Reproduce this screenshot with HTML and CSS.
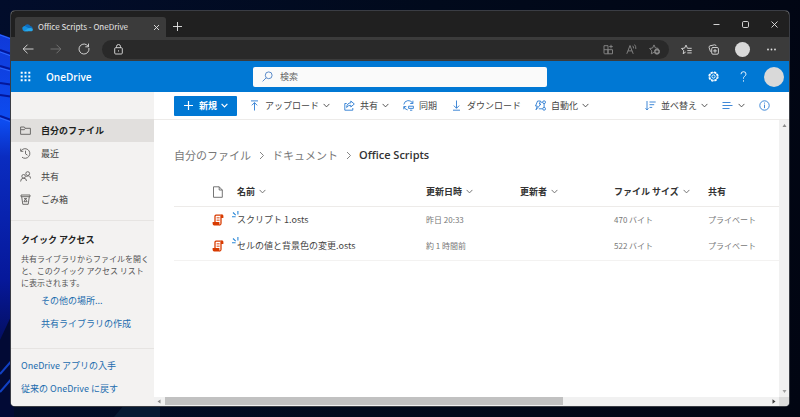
FILE: index.html
```html
<!DOCTYPE html>
<html lang="ja">
<head>
<meta charset="utf-8">
<title>Office Scripts - OneDrive</title>
<link rel="stylesheet" href="styles.css">
</head>
<body>
<svg width="0" height="0" class="sprite" aria-hidden="true">
  <symbol id="chev" viewBox="0 0 7 7"><path d="M.6 1.900 3.500 4.900 6.400 1.900"/></symbol>
  <symbol id="script" viewBox="0 0 12 12">
    <path d="M3 8.500V2.200Q3 1.200 4 1.200H10M9 2v7.500" fill="none" stroke="#d83b01" stroke-width="1.300"/>
    <path d="M9 4V2Q9 .6 10.200.6T11.400 2v2zM.6 8h6.800v1.500q0 1.200.9 2H2.200Q.6 11.300.6 9.500z" fill="#d83b01"/>
    <path d="M7.600 11q1.400 0 1.400-1.800" fill="none" stroke="#d83b01" stroke-width="1.200"/>
    <path d="M4.600 3.500h3M4.600 5h3M4.600 6.500h3" stroke="#e8825e"/>
  </symbol>
  <symbol id="spark" viewBox="0 0 7 7"><path d="M0 5.800h3.600M1 1.500l2.700 2.600M5.900 0v3.500" fill="none" stroke="#2b88d8" stroke-width="1.100"/></symbol>
</svg>
<svg class="wallpaper" viewBox="0 0 160 417" preserveAspectRatio="none" aria-hidden="true">
  <defs>
    <linearGradient id="w1" x1="0" y1="0" x2="0" y2="1"><stop offset="0" stop-color="#1039d8"/><stop offset=".25" stop-color="#0d4cf0"/><stop offset=".35" stop-color="#0a2cc0"/><stop offset=".7" stop-color="#06189a"/><stop offset="1" stop-color="#020839"/></linearGradient>
  </defs>
  <path d="M0 34 14 39V372L0 385z" fill="url(#w1)"/>
  <path d="M0 50 14 55M0 66l14 4M0 83l14 2M0 95l14 2M0 116l14 5" fill="none" stroke="#04179a" stroke-width="2"/>
  <path d="M0 35 14 40M0 52 14 57M0 118l14 5M0 68l14 4" fill="none" stroke="#2f68ff" stroke-width="1"/>
  <path d="M0 340 14 310V417H0z" fill="#020a35"/>
  <path d="M0 374 14 358M0 392 14 376" stroke="#1241c4" stroke-width="2"/>
  <path d="M114 417 124 405H160V417z" fill="#071a33"/>
</svg>

<div class="window">
  <header class="tabstrip">
    <div class="tab">
      <svg class="i11" viewBox="0 0 11 11"><path d="M2.400 4.500A3.200 3.200 0 0 1 8.300 4Q10.500 4 10.800 6.500L6 8z" fill="#0f6cbd"/><path d="M.3 6.400A2.200 2.200 0 0 1 3.700 4.500L8 7 6 9.200H2.400Q.5 8.800.3 6.400z" fill="#1490df"/><path d="M2 9.200 6.500 6.200Q10.900 5.300 10.900 7.500T9 9.200z" fill="#28a8ea"/></svg>
      <span class="tab-title">Office Scripts - OneDrive</span>
      <button aria-label="タブを閉じる"><svg class="i7 line" viewBox="0 0 7 7"><path d="M1 1l5 5M6 1 1 6"/></svg></button>
    </div>
    <button class="newtab" aria-label="新しいタブ"><svg class="i11 line" viewBox="0 0 11 11"><path d="M5.500 1v9M1 5.500h9"/></svg></button>
    <div class="winctl">
      <button aria-label="最小化"><svg class="i9 line" viewBox="0 0 9 9"><path d="M1.500 4.500h6"/></svg></button>
      <button aria-label="最大化"><svg class="i9 line" viewBox="0 0 9 9"><rect x="1.500" y="1.500" width="6" height="6" rx="1.200"/></svg></button>
      <button aria-label="閉じる"><svg class="i9 line" viewBox="0 0 9 9"><path d="M1.500 1.500l6 6M7.500 1.500l-6 6"/></svg></button>
    </div>
  </header>

  <div class="toolbar">
    <button aria-label="戻る"><svg class="i12 line" viewBox="0 0 12 12"><path d="M11.500 6H1.200M5.500 1.700 1.200 6l4.300 4.300"/></svg></button>
    <button class="dim" aria-label="進む"><svg class="i12 line" viewBox="0 0 12 12"><path d="M.5 6h10.300M6.500 1.700 10.800 6l-4.300 4.300"/></svg></button>
    <button aria-label="更新"><svg class="i12 line" viewBox="0 0 12 12"><path d="M10.900 5A5 5 0 1 1 8.500 1.700L10.300 3.500M10.500.6v3.200H7.300"/></svg></button>
    <div class="address">
      <svg class="i11 line" viewBox="0 0 11 11"><rect x="1.700" y="3.700" width="7.600" height="6.300" rx="1"/><path d="M3.500 3.700V2.500a2 2 0 0 1 4 0v1.200M5.500 6.300v1.200"/></svg>
      <input type="text" aria-label="アドレス">
      <button aria-label="アプリ"><svg class="i11 line" viewBox="0 0 11 11"><path d="M1 1.700h4v8.100H1.700Q1 9.800 1 9zM1 5.700h8.500v4.100H5V5.700M8 .8v3.600M6.200 2.600h3.600"/></svg></button>
      <button aria-label="音声で読み上げる"><svg class="i11 line" viewBox="0 0 11 11"><path d="M.8 9.800 4 1.500l3.200 8.300M2 6.900h4M6.700 1.800q1 1 .8 2.600M8.500.6q1.600 1.600 1.300 4.300"/></svg></button>
      <button aria-label="お気に入りに追加"><svg class="i11 line" viewBox="0 0 11 11"><path d="M5 8.300 2.300 9.800l.5-3L.6 4.500l3-.5L5 .9 6.400 4l3 .4"/><circle cx="8" cy="7.600" r="2.600" fill="#8a8a8a"/><path d="M8 6.200V9M6.600 7.600h2.800" stroke="#292929"/></svg></button>
    </div>
    <div class="tools">
      <button aria-label="お気に入り"><svg class="i11 line" viewBox="0 0 11 11"><path d="M4.700 8 2.200 9.700l.6-3L.5 4.500l3.100-.4L5 1.100l1.300 2.800M6.300 4.300h4.400M6.300 6.600h4.400M6.300 8.900h4.400"/></svg></button>
      <button aria-label="コレクション"><svg class="i11 line" viewBox="0 0 11 11"><rect x="3.700" y="3.500" width="6.700" height="6.700" rx="1.300"/><path d="M7 5v3.700M5.200 6.900h3.700M2.500 7.700 1.100 3.500Q.8 2.200 2 1.800L6.700.8q1.200 0 1.400 1.300"/></svg></button>
      <button class="avatar small" aria-label="プロファイル"></button>
      <button aria-label="設定など"><svg class="i11" viewBox="0 0 11 11" fill="#e0e0e0"><circle cx="2" cy="5.500" r=".9"/><circle cx="5.500" cy="5.500" r=".9"/><circle cx="9" cy="5.500" r=".9"/></svg></button>
    </div>
  </div>

  <div class="suite">
    <div class="suite-left">
      <button aria-label="アプリ起動ツール"><svg class="i11" viewBox="0 0 11 11" fill="#fff"><path d="M.7.700h2v2h-2zM4.500.700h2v2h-2zM8.300.700h2v2h-2zM.7 4.500h2v2h-2zM4.500 4.500h2v2h-2zM8.300 4.500h2v2h-2zM.7 8.300h2v2h-2zM4.500 8.300h2v2h-2zM8.300 8.300h2v2h-2z"/></svg></button>
      <a class="brand" href="#">OneDrive</a>
    </div>
    <label class="search">
      <svg class="i11 line" viewBox="0 0 11 11"><circle cx="6.700" cy="4.300" r="3.400"/><path d="M4.200 6.800.6 10.400"/></svg>
      <input type="search" placeholder="検索" aria-label="検索">
    </label>
    <div class="suite-right">
      <button aria-label="設定"><svg class="i11 line" viewBox="0 0 11 11"><circle cx="5.500" cy="5.500" r="4.500" stroke-width="1.300" stroke-dasharray="2.300 1.230"/><circle cx="5.500" cy="5.500" r="3.800"/><circle cx="5.500" cy="5.500" r="1.600"/></svg></button>
      <button aria-label="ヘルプ"><svg class="i11 line" viewBox="0 0 11 11"><path d="M3 3.200Q3 .7 5.500.7T8 3.100Q8 4.300 6.600 5.300T5.500 7.700M5.500 9.300v1.300"/></svg></button>
      <button class="avatar" aria-label="アカウント"></button>
    </div>
  </div>

  <div class="body">
    <aside class="sidebar">
      <nav>
        <a class="current" href="#"><svg class="i11 line" viewBox="0 0 11 11"><path d="M.6 2h3.700l1 1.300h5.100v6H.6zM.6 4.700h3.700l1-1.400"/></svg>自分のファイル</a>
        <a href="#"><svg class="i11 line" viewBox="0 0 11 11"><path d="M1 2.900A4.800 4.800 0 1 1 2 9.200M.7.700V3.300H3.300M5.500 2.700v3.100l2 1.400"/></svg>最近</a>
        <a href="#"><svg class="i11 line" viewBox="0 0 11 11"><circle cx="7.700" cy="2.600" r="1.900"/><circle cx="3.600" cy="5.300" r="1.800"/><path d="M.6 10.500Q.7 7.200 3.600 7.200T6.500 10M6.300 5.600Q10.200 3.300 10.500 7.500"/></svg>共有</a>
        <a href="#"><svg class="i11 line" viewBox="0 0 11 11"><path d="M1 1h9v1.700H1zM1.700 2.700 2.800 10.300h5.400L9.300 2.700M3.900 7.700 5.500 5l1.600 2.700zM4 4.600h3"/></svg>ごみ箱</a>
      </nav>
      <section class="quick">
        <h2>クイック アクセス</h2>
        <p>共有ライブラリからファイルを開くと、このクイック アクセス リストに表示されます。</p>
        <a href="#">その他の場所...</a>
        <a href="#">共有ライブラリの作成</a>
      </section>
      <section class="foot">
        <a href="#">OneDrive アプリの入手</a>
        <a href="#">従来の OneDrive に戻す</a>
      </section>
    </aside>

    <main>
      <div class="commands">
        <button class="primary"><svg class="i11 line" viewBox="0 0 11 11"><path d="M5.500 1v9M1 5.500h9"/></svg>新規<svg class="i7 line"><use href="#chev"/></svg></button>
        <button><svg class="i11 line blue" viewBox="0 0 11 11"><path d="M2 .9h7M5.500 10.500V2.700M2.800 5.300l2.700-2.700 2.700 2.700"/></svg>アップロード<svg class="i7 line"><use href="#chev"/></svg></button>
        <button><svg class="i11 line blue" viewBox="0 0 11 11"><path d="M2.700 3.500H.8v6.700h8V8M6.800 1l3.500 3-3.500 3V5.300Q4 5.200 2.600 7.500 3 3 6.800 2.800z"/></svg>共有<svg class="i7 line"><use href="#chev"/></svg></button>
        <button><svg class="i11 line blue" viewBox="0 0 11 11"><path d="M.8 4.500A4.700 4.700 0 0 1 9.700 3.300M9.900.7v2.800H7.200M4.700 9.900A4.500 4.500 0 0 1 1 6.800M.8 9.300V6.600h2.500M5.600 6.200h4.800v2.200H5.600zM7 10.200h2.300"/></svg>同期</button>
        <button><svg class="i11 line blue" viewBox="0 0 11 11"><path d="M2 10.200h7M5.500.5v7.700M2.800 5.600l2.700 2.700 2.700-2.700"/></svg>ダウンロード</button>
        <button><svg class="i11 line blue" viewBox="0 0 11 11"><path d="M2.600 1h3L4.200 4h1.700L1 9.800 2.300 6H.5zM6 2.200h1.600M3.800 8.800h3.800M9.100 3.600v3.800"/><circle cx="9.100" cy="2.200" r="1.400"/><circle cx="9.100" cy="8.800" r="1.400"/></svg>自動化<svg class="i7 line"><use href="#chev"/></svg></button>
        <div class="view">
          <button><svg class="i11 line blue" viewBox="0 0 11 11"><path d="M2 1v9M.5 8.300 2 9.900l1.500-1.600M4.500 2h6.200M4.500 4.700h4.700M4.500 7.400h2.700"/></svg>並べ替え<svg class="i7 line"><use href="#chev"/></svg></button>
          <button aria-label="表示オプション"><svg class="i11 line blue" viewBox="0 0 11 11"><path d="M.5 2.500h8M.5 5.500h10M.5 8.500h7"/></svg><svg class="i7 line"><use href="#chev"/></svg></button>
          <button aria-label="詳細"><svg class="i11 line blue" viewBox="0 0 11 11"><circle cx="5.500" cy="5.500" r="4.700"/><path d="M5.500 4.600v3.500M5.500 2.600v1"/></svg></button>
        </div>
      </div>

      <div class="pane">
        <div class="content">
          <nav class="crumbs" aria-label="階層リンク">
            <a href="#">自分のファイル</a>
            <svg class="i7 line" viewBox="0 0 7 7"><path d="M2 0l3.500 3.500L2 7"/></svg>
            <a href="#">ドキュメント</a>
            <svg class="i7 line" viewBox="0 0 7 7"><path d="M2 0l3.500 3.500L2 7"/></svg>
            <strong>Office Scripts</strong>
          </nav>
          <table>
            <colgroup><col class="c-type"><col class="c-name"><col class="c-mid"><col class="c-mid"><col class="c-mid"><col></colgroup>
            <thead>
              <tr>
                <th class="type"><svg class="i12 line" viewBox="0 0 12 12"><path d="M1.500.8h5.700L10.300 4v7.300H1.500zM7.200.800V4h3.100"/></svg></th>
                <th><button>名前<svg class="i7 line"><use href="#chev"/></svg></button></th>
                <th><button>更新日時<svg class="i7 line"><use href="#chev"/></svg></button></th>
                <th><button>更新者<svg class="i7 line"><use href="#chev"/></svg></button></th>
                <th><button>ファイル サイズ<svg class="i7 line"><use href="#chev"/></svg></button></th>
                <th>共有</th>
              </tr>
            </thead>
            <tbody>
              <tr>
                <td class="type"><svg class="i12"><use href="#script"/></svg></td>
                <td class="name"><a href="#"><svg class="spark"><use href="#spark"/></svg>スクリプト 1.osts</a></td>
                <td>昨日 20:33</td><td></td><td>470 バイト</td><td>プライベート</td>
              </tr>
              <tr>
                <td class="type"><svg class="i12"><use href="#script"/></svg></td>
                <td class="name"><a href="#"><svg class="spark"><use href="#spark"/></svg>セルの値と背景色の変更.osts</a></td>
                <td>約 1 時間前</td><td></td><td>522 バイト</td><td>プライベート</td>
              </tr>
            </tbody>
          </table>
        </div>
        <div class="vbar"><svg class="i7" viewBox="0 0 7 7"><path d="M1.500 5h4l-2-3z" fill="#8b8b8b"/></svg><svg class="i7" viewBox="0 0 7 7"><path d="M1.500 2h4l-2 3z" fill="#a0a0a0"/></svg></div>
        <div class="hbar"><svg class="i7" viewBox="0 0 7 7"><path d="M4.500 1.500v4l-3-2z" fill="#8b8b8b"/></svg><div class="track"><div class="thumb"></div></div><svg class="i7" viewBox="0 0 7 7"><path d="M2.500 1.200v4.600l3-2.300z" fill="#404040"/></svg></div>
        <div class="corner"></div>
      </div>
    </main>
  </div>
</div>
</body>
</html>
```
FILE: styles.css
```css
* { box-sizing: border-box; }

body {
  margin: 0;
  min-height: 100vh;
  padding: 11px;
  display: flex;
  position: relative;
  background: linear-gradient(100deg, #020d2b, #010a1c 50%, #010512);
  color: #444;
  font: 9px/12px "Noto Sans CJK JP", sans-serif;
}

button, input {
  margin: 0;
  padding: 0;
  border: 0;
  background: none;
  color: inherit;
  font: inherit;
}

button {
  display: inline-flex;
  align-items: center;
  justify-content: center;
  white-space: nowrap;
}

input { min-width: 0; flex: 1; outline: 0; }
input::placeholder { color: #666; opacity: 1; }
a { color: inherit; text-decoration: none; }
svg { flex: none; display: block; }

.sprite { position: absolute; }
.wallpaper { position: absolute; left: 0; top: 0; width: 160px; height: 100%; }

.i7 { width: 7px; height: 7px; }
.i9 { width: 9px; height: 9px; }
.i11 { width: 11px; height: 11px; }
.i12 { width: 12px; height: 12px; }
.line { fill: none; stroke: currentColor; stroke-width: 0.9; }
.blue { color: #2b7cd3; }

.window {
  position: relative;
  flex: 1;
  min-width: 0;
  display: flex;
  flex-direction: column;
  overflow: hidden;
  border-radius: 4px;
  background: #fff;
  box-shadow: 0 0 0 1px #3a3d44;
}

/* Browser chrome */
.tabstrip { display: flex; height: 26px; background: #202020; color: #e6e6e6; }

.tab {
  display: flex;
  align-items: center;
  gap: 5px;
  width: 151px;
  margin: 6px 0 0 4px;
  padding: 0 6px 0 7px;
  border-radius: 3px 3px 0 0;
  background: #3b3b3b;
  font-size: 8px;
}
.tab-title { flex: 1; white-space: nowrap; }
.newtab { margin: 5px 0 0 6px; }
.winctl { display: flex; gap: 20px; margin-left: auto; padding-right: 10px; }

.toolbar {
  display: flex;
  align-items: center;
  gap: 16px;
  height: 24px;
  padding: 0 12px 0 11px;
  background: #3b3b3b;
  color: #e0e0e0;
}
.dim { color: #777; }

.address {
  flex: 1;
  display: flex;
  align-items: center;
  gap: 12px;
  height: 19px;
  margin-left: -4px;
  padding: 0 9px 0 11px;
  border-radius: 10px;
  background: #292929;
}
.address button { color: #8a8a8a; }
.tools { display: flex; align-items: center; gap: 16px; margin-left: -4px; }
.avatar { width: 20px; height: 20px; border-radius: 50%; background: #d9d9d9; }
.avatar.small { width: 15px; height: 15px; }

/* Suite header */
.suite {
  display: grid;
  grid-template-columns: 1fr minmax(0, 294px) 1fr;
  align-items: center;
  height: 31px;
  padding: 0 5px;
  background: #0078d4;
  color: #fff;
}
.suite-left { display: flex; align-items: center; gap: 15px; padding-left: 4px; }
.brand { font-family: "Open Sans", sans-serif; font-size: 10px; font-weight: 600; }
.search {
  display: flex;
  align-items: center;
  gap: 7px;
  height: 20px;
  padding: 0 9px;
  border-radius: 2px;
  background: #fafafa;
  color: #4a7fc4;
}
.search input { color: #333; }
.suite-right { display: flex; align-items: center; justify-content: flex-end; gap: 19px; }
.suite-right .avatar { margin-left: -4px; }

/* Sidebar */
.body { flex: 1; display: flex; min-height: 0; }
.sidebar { flex: none; width: 143px; padding-top: 27px; background: #f3f2f1; }
.sidebar a { display: flex; align-items: center; height: 23px; white-space: nowrap; }
.sidebar nav { padding-bottom: 9px; }
.sidebar nav a { gap: 10px; padding-left: 9px; }
.sidebar nav .current { background: #e1dfdd; color: #201f1e; font-weight: 700; }
.sidebar .line { color: #605e5c; }
.quick, .foot { padding: 0 10px; border-top: 1px solid #e6e4e2; color: #555; }
.quick { padding-top: 11px; padding-bottom: 13px; }
.quick h2 { margin: 0 0 5px; color: #222; font-size: 9px; line-height: 16px; font-weight: 700; }
.quick p { margin: 0 -6px 0 0; font-size: 8px; line-height: 12px; }
.quick a { padding-left: 20px; }
.quick a, .foot a { color: #1b6cae; }
.foot { padding-top: 5px; }

/* Command bar */
main { flex: 1; min-width: 0; display: flex; flex-direction: column; }
.commands {
  display: flex;
  align-items: center;
  gap: 14px;
  height: 28px;
  padding: 0 18px 0 20px;
  border-bottom: 1px solid #edebe9;
}
.commands button { gap: 4px; }
.commands .i11 { margin-right: 1px; }
.commands .primary {
  height: 20px;
  margin-right: -2px;
  padding: 0 9px;
  border-radius: 1px;
  background: #0078d4;
  color: #fff;
  font-weight: 700;
}
.primary .line { stroke-width: 1.2; }
.view { display: flex; gap: 14px; margin-left: auto; }

/* File list */
.pane {
  flex: 1;
  min-height: 0;
  display: grid;
  grid-template: 1fr 9px / minmax(0, 1fr) 10px;
}
.content { padding: 24px 0 0 20px; }
.crumbs {
  display: flex;
  align-items: center;
  gap: 7px;
  height: 22px;
  margin-bottom: 12px;
  color: #777;
  font-size: 11px;
  line-height: 16px;
}
.crumbs strong { color: #333; font-family: "Open Sans", sans-serif; font-weight: 600; }

table { width: 100%; table-layout: fixed; border-collapse: collapse; }
.c-type { width: 63px; }
.c-name { width: 189px; }
.c-mid { width: 94px; }
th, td { height: 27px; padding: 0; text-align: left; white-space: nowrap; }
th { height: 28px; color: #333; font-weight: 700; border-bottom: 1px solid #edebe9; }
th button { gap: 4px; }
th .line { color: #666; }
td { color: #777; font-size: 8px; }
tbody tr:last-child td { border-bottom: 1px solid #f3f2f1; }
th.type, td.type { padding-left: 38px; }
td.name { color: #444; font-size: 9px; }
.name a { position: relative; }
.spark { position: absolute; left: -5px; top: -2px; width: 7px; height: 7px; }

/* Scrollbars */
.vbar, .hbar { display: flex; align-items: center; justify-content: space-between; background: #f1f1f1; }
.vbar { flex-direction: column; padding: 2px 0; }
.hbar { padding: 0 2px; }
.track { flex: 1; align-self: stretch; margin: 0 2px; }
.thumb { width: 66%; height: 8px; background: #c1c1c1; }
.corner { background: #dcdcdc; }
```
